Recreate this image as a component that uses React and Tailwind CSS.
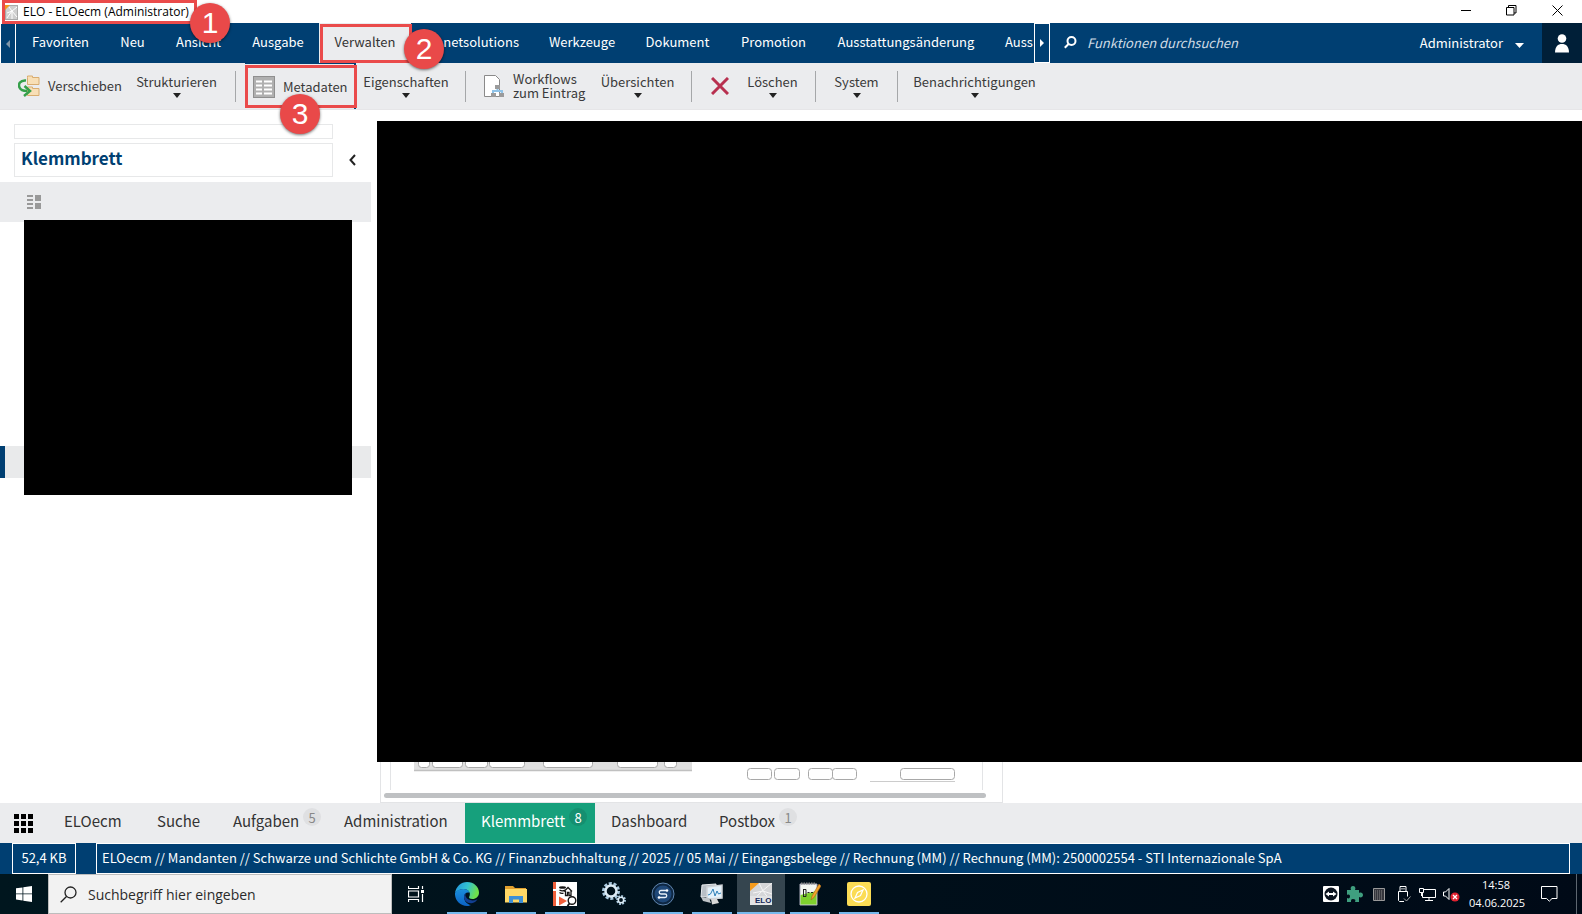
import React from "react";

const Callout = ({ n, className }) => (
  <span
    className={
      "absolute z-20 flex h-10 w-10 items-center justify-center rounded-full bg-[#e94949] font-['Liberation_Sans',sans-serif] text-[30px] leading-none text-white shadow-[0_1px_3px_rgba(0,0,0,0.55)] " +
      className
    }
  >
    {n}
  </span>
);

const Frame = ({ className }) => (
  <span className={"pointer-events-none absolute z-10 border-3 border-[#ea4b4b] " + className} />
);

const Triangle = ({ className }) => (
  <svg className={className} width="8" height="5" viewBox="0 0 8 5" fill="currentColor">
    <path d="M0 0h8L4 5z" />
  </svg>
);

const NavItem = ({ children, className = "" }) => (
  <button className={"flex shrink-0 items-center justify-center px-[15px] pb-[2px] whitespace-nowrap " + className}>{children}</button>
);

const Drop = ({ children, className = "" }) => (
  <button className={"flex h-full shrink-0 flex-col items-center pt-[9px] " + className}>
    <span className="leading-5">{children}</span>
    <Triangle className="mt-[1px] text-[#222]" />
  </button>
);

const Sep = ({ className }) => <span className={"h-[31px] w-px shrink-0 self-center bg-[#a5a7a9] " + className} />;

function TitleBar() {
  return (
    <header className="relative flex h-[23px] items-center bg-white pl-[5px]">
      <svg width="13" height="15" viewBox="0 0 13 15" className="mt-px">
        <rect x=".5" y=".5" width="12" height="14" fill="#cfcfcf" stroke="#a9a9a9" />
        <path d="M2 13L7 6l5-4M7 6l5 6M7 6L4 2M7 6l-5 2M7 6v8" stroke="#fff" fill="none" />
        <path d="M0 0h5L0 5z" fill="#f39a1e" />
      </svg>
      <h1 className="ml-[5px] font-['Open_Sans',sans-serif] text-[12px] leading-4 text-black">ELO - ELOecm (Administrator)</h1>
      <div className="ml-auto flex h-full items-center pr-px pb-[3px]">
        <button aria-label="Minimieren" className="flex h-full w-[45px] items-center justify-center">
          <svg width="11" height="11" viewBox="0 0 11 11"><path d="M0 5.500h10" stroke="#000" /></svg>
        </button>
        <button aria-label="Verkleinern" className="flex h-full w-[45px] items-center justify-center">
          <svg width="11" height="11" viewBox="0 0 11 11" fill="none" stroke="#000"><path d="M.5 2.500h7.500v7.500H.5zM2.500 2.500V.5h7.500v7.500H8" /></svg>
        </button>
        <button aria-label="Schließen" className="flex h-full w-[47px] items-center justify-center">
          <svg width="11" height="11" viewBox="0 0 11 11" stroke="#000"><path d="M.5.5l10 10M10.500.5l-10 10" /></svg>
        </button>
      </div>
      <Frame className="top-0 left-[2px] h-6 w-[195px]" />
      <Callout n="1" className="top-[3px] left-[190px]" />
    </header>
  );
}

function MainNav() {
  return (
    <nav className="flex h-10 bg-[#003f72] text-[13px] text-white">
      <button aria-label="Zurück blättern" className="flex w-4 shrink-0 items-center justify-center border border-b-0 border-white text-[#7f95a8]">
        <svg width="4" height="8" viewBox="0 0 4 8" fill="currentColor"><path d="M4 0v8L0 4z" /></svg>
      </button>
      <div className="flex w-[1018px] shrink overflow-x-clip">
        <NavItem className="w-[89px]">Favoriten</NavItem>
        <NavItem className="w-[55px]">Neu</NavItem>
        <NavItem className="w-[77px]">Ansicht</NavItem>
        <NavItem className="w-[82px]">Ausgabe</NavItem>
        <div className="relative flex w-[92px] shrink-0 bg-[#ebecee] text-[#333]">
          <NavItem className="w-full">Verwalten</NavItem>
          <Frame className="top-[1px] left-[1px] h-[39px] w-[92px]" />
          <Callout n="2" className="top-[6px] left-[85px]" />
        </div>
        <NavItem className="w-[123px] justify-end!">netsolutions</NavItem>
        <NavItem className="w-[96px]">Werkzeuge</NavItem>
        <NavItem className="w-[95px]">Dokument</NavItem>
        <NavItem className="w-[97px]">Promotion</NavItem>
        <NavItem className="w-[168px]">Ausstattungsänderung</NavItem>
        <NavItem className="pr-0!">Auss</NavItem>
      </div>
      <button aria-label="Weiter blättern" className="flex w-4 shrink-0 items-center justify-center border border-white">
        <svg width="4" height="8" viewBox="0 0 4 8" fill="currentColor"><path d="M0 0v8l4-4z" /></svg>
      </button>
      <label className="flex min-w-0 flex-1 items-center pb-px pl-[14px]">
        <svg width="13" height="13" viewBox="0 0 13 13" fill="none" stroke="#fff" strokeWidth="2">
          <circle cx="7.500" cy="5" r="4" /><path d="M4.500 8L.8 11.800" />
        </svg>
        <input aria-label="Funktionen durchsuchen" placeholder="Funktionen durchsuchen" className="ml-[10px] h-full min-w-0 flex-1 bg-transparent italic outline-none placeholder:text-[#cfdbe5]" />
      </label>
      <button className="flex items-center gap-3 pr-[18px]">
        <span>Administrator</span>
        <svg width="9" height="5" viewBox="0 0 9 5" fill="#fff" className="mt-1"><path d="M0 0h9L4.500 5z" /></svg>
      </button>
      <button aria-label="Profil" className="flex w-10 shrink-0 items-center justify-center bg-[#001f38]">
        <svg width="14" height="19" viewBox="0 0 14 19" fill="#fff"><circle cx="7" cy="4.500" r="4.300" /><path d="M0 18.500C0 12.500 3 10 7 10s7 2.500 7 8.500z" /></svg>
      </button>
    </nav>
  );
}

function Toolbar() {
  return (
    <div role="toolbar" className="flex h-[47px] items-stretch border-b border-[#e6e6e8] bg-[#ebecee] text-[13px] text-[#3a3a3a]">
      <button className="flex w-[120px] shrink-0 items-center gap-2 pl-[18px] whitespace-nowrap">
        <svg width="22" height="22" viewBox="0 0 22 22" className="shrink-0" fill="none">
          <path d="M9.500 2.500V1h5v1.500h6.500v7H9.500zM9.500 13.500V12h5v1.500h6.500v7H9.500z" fill="#f8dfb6" stroke="#d9ad70" />
          <path d="M8 5.500C2 5 0 9 1.500 12.500S6 16 9 16" stroke="#35a04a" strokeWidth="2.500" />
          <path d="M6.500 11l5.500 5-6 5" stroke="#35a04a" strokeWidth="2.500" />
        </svg>
        <span>Verschieben</span>
      </button>
      <Drop className="ml-[17px] w-[79px]">Strukturieren</Drop>
      <Sep className="ml-[19px]" />
      <div className="relative ml-[9px] flex w-[111px] shrink-0">
        <button className="flex w-full items-center gap-2 border-t border-r-2 border-[#003f72] pl-2">
          <svg width="22" height="22" viewBox="0 0 22 22">
            <rect x=".5" y=".5" width="21" height="21" fill="#b0b0b0" stroke="#8f8f8f" />
            <path d="M3 5.500h6M3 9.500h6M3 13.500h6M3 17.500h6M11 5.500h8M11 9.500h8M11 13.500h8M11 17.500h8" stroke="#fff" strokeWidth="2" />
          </svg>
          <span>Metadaten</span>
        </button>
        <Frame className="top-[2px] left-0 h-[43px] w-[112px]" />
        <Callout n="3" className="top-[31px] left-[35px]" />
      </div>
      <Drop className="ml-[9px] w-[82px]">Eigenschaften</Drop>
      <Sep className="ml-[18px]" />
      <button className="ml-[18px] flex w-[101px] shrink-0 items-center gap-2 text-left leading-[14px] whitespace-nowrap">
        <svg width="21" height="23" viewBox="0 0 21 23" fill="none" className="shrink-0">
          <path d="M.5.5h11l4 4v17H.5z" fill="#fff" stroke="#8a8a8a" />
          <path d="M11 12h5M13.500 12v4M9 19v-3h9v3" stroke="#8fc3e8" strokeWidth="2" />
          <path d="M11 10h5v4h-5zM7 18h5v4H7zM15 18h5v4h-5z" fill="#9b9b9b" />
        </svg>
        <span>Workflows<br />zum Eintrag</span>
      </button>
      <Drop className="ml-[16px] w-[73px]">Übersichten</Drop>
      <Sep className="ml-[17px]" />
      <svg width="18" height="18" viewBox="0 0 18 18" className="ml-[19px] shrink-0 self-center" stroke="#b8304f" strokeWidth="3"><path d="M1 1l16 16M17 1L1 17" /></svg>
      <Drop className="ml-[19px] w-[49px]">Löschen</Drop>
      <Sep className="ml-[18px]" />
      <Drop className="ml-[18px] w-[45px]">System</Drop>
      <Sep className="ml-[18px]" />
      <Drop className="ml-[16px] w-[121px]">Benachrichtigungen</Drop>
    </div>
  );
}

function Clipboard() {
  return (
    <aside className="flex w-[371px] shrink-0 flex-col bg-white pt-[14px]">
      <div className="ml-[14px] h-[15px] w-[319px] border border-[#e7e8e9]" />
      <div className="mt-1 flex items-center">
        <h2 className="ml-[14px] flex h-[34px] w-[319px] items-center border border-[#e7e8e9] pb-1 pl-[6px] text-[17px] font-bold text-[#003f72]">Klemmbrett</h2>
        <button aria-label="Einklappen" className="ml-4">
          <svg width="7" height="12" viewBox="0 0 7 12" fill="none" stroke="#222" strokeWidth="2"><path d="M6 1L1.500 6 6 11" /></svg>
        </button>
      </div>
      <div className="mt-[5px] flex h-10 shrink-0 items-center bg-[#ebecee] pl-[27px]">
        <svg width="14" height="14" viewBox="0 0 14 14" fill="#999"><path d="M0 0h6v2H0zM0 4h6v2H0zM0 8h6v2H0zM0 12h6v2H0zM8 0h6v6H8zM8 8h6v6H8z" /></svg>
      </div>
      <div className="-mt-[2px] grid">
        <div className="col-start-1 row-start-1 mt-[226px] h-8 border-l-[5px] border-[#003f72] bg-[#e9eaeb]" />
        <div className="relative col-start-1 row-start-1 mr-[19px] ml-6 h-[275px] bg-black" />
      </div>
    </aside>
  );
}

const cells = [
  [418, 12], [432, 31], [465, 23], [489, 36], [543, 50], [617, 41], [664, 13],
];
const fields = [
  [747, 25], [774, 26], [808, 25], [832, 25], [900, 55],
];

function Preview() {
  return (
    <section className="flex min-w-0 flex-1 flex-col pt-[11px] pl-[6px]">
      <div className="min-h-[400px] flex-1 bg-black" />
      <div className="ml-[3px] w-[623px] max-w-full overflow-hidden border-r border-b border-l border-[#e3e4e6]">
        <svg width="621" height="30" viewBox="381 762 621 30" fill="none" className="block">
          <path d="M390.500 762v28M982.500 762v28" stroke="#e3e4e6" />
          <rect x="414" y="762" width="278" height="8" fill="#dfdfdf" />
          <path d="M414 770.500h278" stroke="#c0c0c0" strokeWidth="1.500" />
          {cells.map(([x, w]) => (
            <rect key={x} x={x + 0.5} y="755.500" width={w - 1} height="12" rx="3" fill="#fff" stroke="#a8a8a8" />
          ))}
          {fields.map(([x, w]) => (
            <rect key={x} x={x + 0.5} y="768.500" width={w - 1} height="11" rx="3" fill="#fff" stroke="#a8a8a8" />
          ))}
          <path d="M870 781.500h85" stroke="#ccc" />
        </svg>
        <div className="mt-[1px] mr-4 mb-1 ml-[3px] h-[5px] rounded-full bg-[#bfc1c3]" />
      </div>
    </section>
  );
}

const Tab = ({ label, count, active, className = "" }) => (
  <button
    className={
      "flex h-full shrink-0 items-center pl-4 whitespace-nowrap " + (active ? "bg-[#16a07c] text-white " : "") + className
    }
  >
    <span className="pb-[3px]">{label}</span>
    {count && (
      <span className={"mb-3 ml-1 flex h-[18px] w-[18px] items-center justify-center rounded-full text-[13px] leading-none " + (active ? "bg-[#158f70]" : "bg-[#dfe0e2] text-[#888]")}>
        {count}
      </span>
    )}
  </button>
);

function TabBar() {
  return (
    <nav className="flex h-10 shrink-0 items-center bg-[#ebecee] text-[15px] text-[#333]">
      <button aria-label="Kacheln" className="ml-[14px]">
        <svg width="19" height="19" viewBox="0 0 19 19" fill="#000"><path d="M0 0h5v5H0zM7 0h5v5H7zM14 0h5v5h-5zM0 7h5v5H0zM7 7h5v5H7zM14 7h5v5h-5zM0 14h5v5H0zM7 14h5v5H7zM14 14h5v5h-5z" /></svg>
      </button>
      <Tab label="ELOecm" className="ml-[15px] w-[93px]" />
      <Tab label="Suche" className="w-[76px]" />
      <Tab label="Aufgaben" count="5" className="w-[111px]" />
      <Tab label="Administration" className="w-[137px]" />
      <Tab label="Klemmbrett" count="8" active className="w-[130px]" />
      <Tab label="Dashboard" className="w-[108px]" />
      <Tab label="Postbox" count="1" />
    </nav>
  );
}

function StatusBar() {
  return (
    <div className="flex h-[31px] shrink-0 bg-[#003f72] pr-3 pl-3 text-[13px] text-white">
      <div className="flex w-16 shrink-0 items-center justify-center border border-white pb-px">52,4 KB</div>
      <div className="ml-5 flex min-w-0 flex-1 items-center border border-white pb-px pl-[5px] whitespace-nowrap">
        ELOecm // Mandanten // Schwarze und Schlichte GmbH &amp; Co. KG // Finanzbuchhaltung // 2025 // 05 Mai // Eingangsbelege // Rechnung (MM) // Rechnung (MM): 2500002554 - STI Internazionale SpA
      </div>
    </div>
  );
}

const Edge = () => (
  <svg width="24" height="24" viewBox="0 0 24 24">
    <defs>
      <linearGradient id="eg1" x1="0" y1="0" x2="1" y2=".3"><stop offset="0" stopColor="#1f8fe0" /><stop offset=".55" stopColor="#33c3d0" /><stop offset="1" stopColor="#6fe04a" /></linearGradient>
      <linearGradient id="eg2" x1="0" y1="0" x2="0" y2="1"><stop offset="0" stopColor="#1b8fdc" /><stop offset="1" stopColor="#0b62c4" /></linearGradient>
    </defs>
    <path d="M0 11C1 4.500 6 0 12 0c7 0 12 5 12 10.500 0 4-3 6.500-6.500 6.500-3 0-4-1.200-3.200-2.500 2-3.500-1-7.500-5.300-7.500C5 7 1.500 9 0 11z" fill="url(#eg1)" />
    <path d="M0 11c1.500-3 5-4 8.500-4 3 0 5.500 1.500 6.200 4-2.500-1.500-5.700.5-5.700 4 0 4 3 7.500 7 8C14 24 13 24 12 24 5 24-.5 18 0 11z" fill="url(#eg2)" />
    <path d="M9 14c-.5 5 4 8 8.500 7 2-.5 4-2 5-3.800-4.500 2.300-10.500 1.300-12-3.200-.3-1 .2-2.500 1-3C10 11.300 9.100 12.500 9 14z" fill="#123f91" />
  </svg>
);
const Folder = () => (
  <svg width="22" height="18" viewBox="0 0 22 18">
    <path d="M0 1h8l2 2h11v14H0z" fill="#e0a030" /><path d="M0 4h22v13.500H0z" fill="#ffd866" />
    <path d="M4 18v-7h14v7h-4v-3.500H8V18z" fill="#3d8fd6" />
  </svg>
);
const DataApp = () => (
  <svg width="24" height="24" viewBox="0 0 24 24" fill="none">
    <path d="M0 0h24v24H0z" fill="#fff" /><path d="M0 0h3v7H0zM0 9h3v15H0z" fill="#f0603c" />
    <ellipse cx="9.500" cy="5.500" rx="3.500" ry="1.300" fill="#151515" />
    <path d="M6.500 8c1.500 1 4 1 5.500 0M6.500 10.500c1 .8 2.500 1 4 .6M11 9.500L15 5.500l4 4M12.500 9v4.500h2v-3h1.500v3h2V9" stroke="#151515" strokeWidth="1.300" />
    <path d="M6 14.500l8 4.500-8 4.500z" fill="#f0603c" /><circle cx="19" cy="18.500" r="3.800" stroke="#151515" strokeWidth="1.400" /><path d="M16.500 21.500L14.500 24" stroke="#151515" strokeWidth="2" />
  </svg>
);
const Gears = () => (
  <svg width="24" height="24" viewBox="0 0 24 24" fill="none">
    <circle cx="9" cy="9" r="7.500" stroke="#a9c9df" strokeWidth="3" strokeDasharray="3 1.700" /><circle cx="9" cy="9" r="5.500" stroke="#dcebf5" strokeWidth="2.500" />
    <circle cx="19" cy="18" r="4" stroke="#a9c9df" strokeWidth="2" strokeDasharray="1.800 1.300" /><circle cx="19" cy="18" r="2.700" stroke="#dcebf5" strokeWidth="1.600" />
  </svg>
);
const Flow = () => (
  <svg width="24" height="24" viewBox="0 0 24 24" fill="none">
    <circle cx="12" cy="12" r="11" fill="#0e2742" stroke="#5f86b0" /><circle cx="12" cy="12" r="8.500" fill="#1f4878" />
    <path d="M15.500 8.500H10a1.700 1.700 0 0 0 0 3.500h4a1.700 1.700 0 0 1 0 3.500H8.500" stroke="#e8f0f8" strokeWidth="1.300" />
    <circle cx="16" cy="8.500" r="1.300" fill="#fff" /><circle cx="8" cy="15.500" r="1.300" fill="#fff" />
  </svg>
);
const Monitor = () => (
  <svg width="24" height="22" viewBox="0 0 24 22" fill="none">
    <path d="M2 2l14-1v12L1 14z" fill="#b8bfc6" stroke="#e9ecef" /><path d="M7 4l15-2v13l-15 1z" fill="#e4f2fb" stroke="#d0d4d8" strokeWidth="1.500" />
    <path d="M8 12l2.500-1L13 6l2 7 2-5 1.500 3L21 10" stroke="#2d7fb8" /><path d="M11 16h6l2 4-7 1.500z" fill="#d8d8d8" /><path d="M1 14l8 1 2 5-8-2z" fill="#bfc4c8" />
  </svg>
);
const Elo = () => (
  <svg width="22" height="22" viewBox="0 0 22 22">
    <path d="M0 0h22v22H0z" fill="#d5d6d8" /><path d="M22 0L11 9 1 20M13 8L9 0M13 8l9 3M13 8l6 8M13 8L3 10" stroke="#f5f5f5" fill="none" />
    <path d="M0 0h9L0 8z" fill="#f59b1c" /><path d="M0 13h22v9H0z" fill="#e2e3e4" />
    <text x="5" y="20" fontSize="8" fontWeight="900" fontFamily="Liberation Sans, sans-serif" fill="#14285a">ELO</text>
  </svg>
);
const Notepad = () => (
  <svg width="22" height="24" viewBox="0 0 22 24" fill="none">
    <path d="M1 2h17v21H1z" fill="#f4f7f2" stroke="#aab" /><path d="M1.500 13l16-4v13.500h-16z" fill="#7fd02e" /><path d="M2 1.500h15" stroke="#888" strokeWidth="2" strokeDasharray="1.500 1" />
    <path d="M4.500 7v8M4 7.500h3v7H4M8.500 10.500h2M12 10.500h2" stroke="#222" /><path d="M20 2l-7 12-1 4 3-2.500L22 4z" fill="#f3a32b" stroke="#a8641a" strokeWidth=".6" />
  </svg>
);
const Compass = () => (
  <svg width="24" height="24" viewBox="0 0 24 24" fill="none">
    <rect width="24" height="24" rx="2" fill="#fbdc55" /><circle cx="12" cy="12" r="8" stroke="#fff" strokeWidth="1.300" /><path d="M16 8l-2.500 5.500L8 16l2.500-5.500z" stroke="#fff" strokeWidth="1.200" />
  </svg>
);

const apps = [
  ["Edge", Edge, true], ["Explorer", Folder, true], ["Datenanalyse", DataApp, true], ["Dienste", Gears, false], ["Workflow", Flow, true],
  ["Monitor", Monitor, true], ["ELO", Elo, true, true], ["Editor", Notepad, true], ["Kompass", Compass, true],
];

function Taskbar() {
  return (
    <footer className="flex h-10 shrink-0 bg-linear-to-r from-[#00161e] to-[#000a17] font-['Open_Sans',sans-serif] text-white">
      <button aria-label="Start" className="flex w-12 shrink-0 items-center justify-center">
        <svg width="16" height="16" viewBox="0 0 16 16" fill="#fff"><path d="M0 2.300l6.500-.9v6.100H0zM7.300 1.300L16 0v7.500H7.300zM0 8.300h6.500v6.200L0 13.600zM7.300 8.300H16V16l-8.700-1.300z" /></svg>
      </button>
      <label className="flex w-[344px] items-center border border-[#bdbdbd] bg-[#f2f2f2] pl-[11px]">
        <svg width="17" height="17" viewBox="0 0 17 17" fill="none" stroke="#222" strokeWidth="1.300"><circle cx="10.500" cy="6.500" r="5.500" /><path d="M6.500 10.500L.7 16.300" /></svg>
        <input aria-label="Suche" placeholder="Suchbegriff hier eingeben" className="ml-[11px] h-full min-w-0 flex-1 bg-transparent text-[14px] text-[#222] outline-none placeholder:text-[#2b2b2b]" />
      </label>
      <button aria-label="Aktive Anwendungen" className="flex w-[51px] shrink-0 items-center justify-center pr-[2px] pb-px">
        <svg width="17" height="16" viewBox="0 0 17 16" fill="none" stroke="#fff"><path d="M.5 0v2.500h10V0M.5 16v-2.500h10V16M.5 5h10v6H.5zM14.500 0v3M14.500 8v8" strokeWidth="1.200" /><path d="M13 4h3v3h-3z" fill="#fff" stroke="none" /></svg>
      </button>
      <div className="flex gap-px">
        {apps.map(([name, Icon, open, active]) => (
          <button key={name} aria-label={name} className={"flex w-12 flex-col items-center " + (active ? "bg-[#35454f]" : "")}>
            <span className="flex h-[38px] items-center justify-center pt-[2px]"><Icon /></span>
            <span className={"h-[2px] " + (active ? "w-12 " : "w-10 ") + (open ? "bg-[#76b9ed]" : "")} />
          </button>
        ))}
      </div>
      <div className="ml-auto flex items-center">
        <svg width="16" height="16" viewBox="0 0 16 16"><rect width="16" height="16" rx="1" fill="#fff" /><circle cx="8" cy="8" r="6.500" fill="#0b1420" /><path d="M2.500 8L6 5.500V7h4V5.500L13.500 8 10 10.500V9H6v1.500z" fill="#fff" /></svg>
        <svg width="16" height="16" viewBox="0 0 16 16" className="ml-2" fill="#3f9f7f"><path d="M0 4h4c-1-2 0-4 2-4s3 2 2 4h4v3c2-1 4 0 4 2s-2 3-4 2v5H8c1-2 0-3-2-3s-2 1-2 3H0v-4c2 1 3 0 3-1.500S2 8 0 9z" /></svg>
        <svg width="12" height="13" viewBox="0 0 12 13" className="ml-[10px]"><path d="M.5.5h11v12H.5z" fill="#34353c" stroke="#9a9a9a" /><path d="M2 3h8M2 5h8M2 7h8M2 9h8M2 11h8" stroke="#888" strokeDasharray="1 1" /></svg>
        <svg width="14" height="17" viewBox="0 0 14 17" className="ml-3" fill="none" stroke="#fff"><path d="M3 5V.5h6V5M1.500 14.500V5.500h9v5M1.500 14.500l1 1H7M5 2v1.500M7 2v1.500" /><path d="M7 12.500l2.500 2.500L13.500 10.500" stroke="#aaa" /></svg>
        <svg width="17" height="15" viewBox="0 0 17 15" className="ml-2" fill="none" stroke="#fff"><path d="M5 2.500h11.500v8h-13V6M10 10.500v3M6 13.500h8M.5 1.500h4v4h-4zM2.500 6v3" /></svg>
        <svg width="17" height="15" viewBox="0 0 17 15" className="ml-[7px]" fill="none"><path d="M.5 5h2L6 1.500v11L2.500 9h-2z" stroke="#fff" /><circle cx="12" cy="10" r="4.500" fill="#e02230" /><path d="M10 8l4 4M14 8l-4 4" stroke="#fff" strokeWidth="1.300" /></svg>
        <div className="ml-[9px] w-[54px] text-center text-[11px] leading-[18px] whitespace-nowrap">
          <div>14:58</div>
          <div>04.06.2025</div>
        </div>
        <svg width="17" height="16" viewBox="0 0 17 16" className="ml-[18px]" fill="none" stroke="#fff"><path d="M.5.5h15.500v12h-5l-2.700 2.700-2.700-2.700H.5z" /></svg>
        <span className="ml-[18px] h-10 w-[6px] border-l border-[#5d6670]" />
      </div>
    </footer>
  );
}

export default function App() {
  return (
    <div className="flex min-h-screen flex-col overflow-x-hidden bg-white font-['Noto_Sans_CJK_SC',sans-serif]">
      <TitleBar />
      <MainNav />
      <Toolbar />
      <main className="flex flex-1">
        <Clipboard />
        <Preview />
      </main>
      <TabBar />
      <StatusBar />
      <Taskbar />
    </div>
  );
}
